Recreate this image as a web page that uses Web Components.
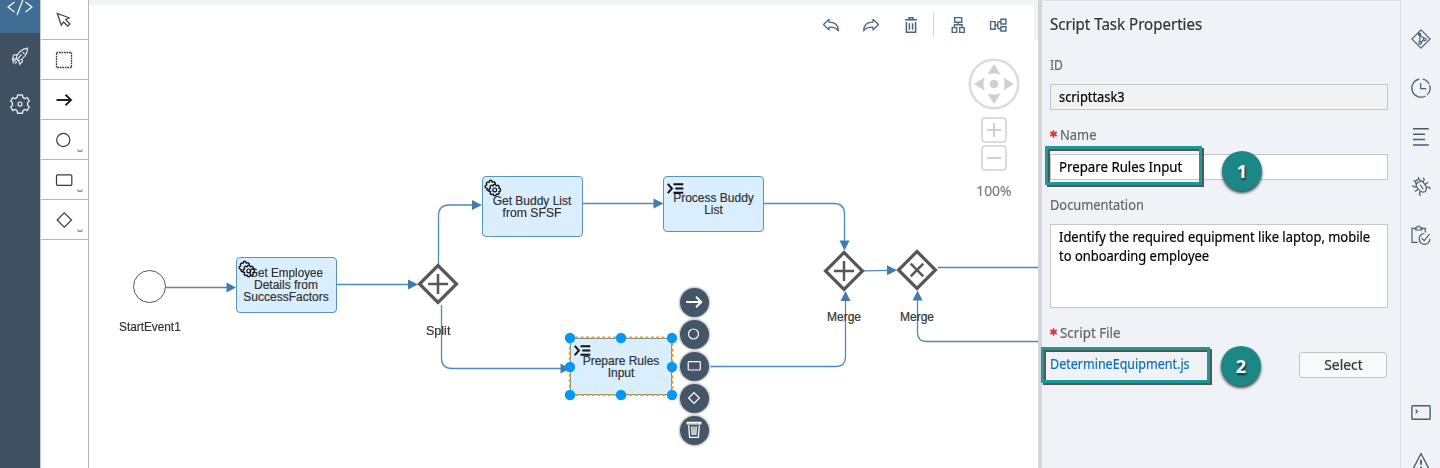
<!DOCTYPE html>
<html lang="en">
<head>
<meta charset="utf-8">
<title>Process editor</title>
<style>
html,body{margin:0;height:100%;overflow:hidden;background:#fff}
body{font-family:"Liberation Sans",Arial,sans-serif}
</style>
</head>
<body>
<process-editor></process-editor>
<script>
const ICONS = {
  code: [30,30,'<path d="M9.500 10 L3 15 L9.500 20 M20.500 10 L27 15 L20.500 20 M18 7.500 L12 23"/>'],
  rocket: [20,20,'<path d="M6.200 12.800 C6.500 8 11 3 17.500 2.200 C17.500 8 13.500 13 8.500 14.800 Z M7 8.600 L3.500 9.200 L2.500 12.800 L6.200 12.600 M12 13.200 L12.500 15.500 L9.800 18.300 L8.600 14.800 M11.500 8.500 L7.500 13.200 M12.700 6.200 L14.500 7.800 M5.500 14 L2.800 17 M3.700 13.500 L2.300 15 M7 15.500 L5 18"/>'],
  gear: [22,22,'<path stroke-linejoin="round" stroke-width="1.400" d="M8.600 2 H13.400 L14.100 4.700 L15.900 5.700 L18.300 4.700 L20.300 8 L18.600 9.700 V12.300 L20.300 14 L18.300 17.500 L15.900 16.400 L14.100 17.500 L13.400 20.200 H8.600 L7.900 17.500 L6.100 16.400 L3.700 17.500 L1.700 14 L3.400 12.300 V9.700 L1.700 8 L3.700 4.700 L6.100 5.700 L7.900 4.700 Z"/><circle cx="11" cy="11.100" r="2"/>'],
  pointer: [20,20,'<path d="M3.300 3.500 L7.300 15.200 L9.600 12 L13.800 16.200 L16 14 L11.800 9.800 L15.200 7.800 Z"/>'],
  marquee: [20,20,'<rect x="2.500" y="2.500" width="15" height="15" stroke-width="1.300" stroke-dasharray="1.700 0.800"/>'],
  arrow: [20,20,'<path stroke-width="1.900" d="M2.500 10 H17 M11.500 4.800 L17 10 L11.500 15.200"/>'],
  circle: [20,20,'<circle cx="9.300" cy="10" r="6.600"/>'],
  rect: [20,20,'<rect x="2.500" y="4.800" width="15.300" height="10.500" rx="1"/>'],
  diamond: [20,20,'<path d="M10.300 2.800 L17.500 10 L10.300 17.200 L3.100 10 Z"/>'],
  chev: [6,4,'<path d="M0.500 0.800 Q1.500 2.800 3 2.300 Q4.500 2.800 5.500 0.800" stroke-width="1.200"/>'],
  undo: [20,20,'<path stroke-linejoin="round" d="M2.500 9.500 L8 4.300 V7.200 C13.500 7.200 17.200 10 17.400 15.800 C15 12.600 12 12 8 12.200 V15 Z"/>'],
  redo: [20,20,'<path stroke-linejoin="round" d="M17.500 9.500 L12 4.300 V7.200 C6.500 7.200 2.800 10 2.600 15.800 C5 12.600 8 12 12 12.200 V15 Z"/>'],
  trash: [20,20,'<path stroke-width="1.500" d="M4 4.800 H16 M8 4.300 V2.700 H12 V4.300 M5.400 7 V17.300 H14.600 V7 M8.400 8.200 V14.800 M11.600 8.200 V14.800"/>'],
  tree: [20,20,'<path stroke-width="1.400" d="M6.700 2.600 H13.700 V7.200 H6.700 Z M4.200 12.600 H8.700 V17.400 H4.200 Z M11.700 12.600 H16.200 V17.400 H11.700 Z M10.200 7.200 V9.800 M6.400 12.600 V9.800 H14 V12.600"/>'],
  htree: [20,20,'<path stroke-width="1.400" d="M2.600 6.600 H7.100 V14.300 H2.600 Z M12.900 4.300 H17.900 V9 H12.900 Z M12.900 11.700 H17.900 V16 H12.900 Z M7.100 10.300 H9.700 M12.900 6.800 H11 Q9.800 6.800 9.800 8 V12.600 Q9.800 13.800 11 13.800 H12.900"/>'],
  git: [20,20,'<path stroke-width="1.100" d="M10 .9 L19.100 10 L10 19.100 L.9 10 Z M8.600 5 L9 12 M9.300 6.500 L13.300 9.500 M12.600 11 L10.500 13"/><circle cx="8.500" cy="5.200" r="1.100"/><circle cx="13.800" cy="10.300" r="1.300"/><circle cx="9.200" cy="13.700" r="1.400"/>'],
  clock: [20,20,'<path d="M8.300 1.100 A9.100 9.100 0 1 0 14.500 17.900 M16 16.900 A9.100 9.100 0 0 0 18.700 7.300 M18.200 6 A9.100 9.100 0 0 0 11.800 1.200 M9.700 5 V10.700 H15.300"/>'],
  lines: [20,20,'<path stroke-width="1.500" d="M2 1.800 H17.800 M2 7.300 H14 M2 12.500 H14 M2 18 H17.800"/>'],
  bug: [20,20,'<g transform="rotate(-35 10 10)"><path d="M6 8 Q6 5.500 10 5.500 Q14 5.500 14 8 V11.500 Q14 16 10 17 Q6 16 6 11.500 Z M7 5.800 Q7.300 2.800 10 2.800 Q12.700 2.800 13 5.800 M10 8.500 V14 M8 3.500 L7 1 M12 3.500 L13 1 M6 8 L3.500 6.500 V4.500 M6 11 H2 M6.500 14 L4 15.500 V18 M14 8 L16.500 6.500 V4.500 M14 11 H18 M13.500 14 L16 15.500 V18"/></g>'],
  clip: [20,20,'<path d="M6.500 17.300 H1 V3.400 H4.300 M11 3.400 H14.300 V7.400 M4.700 5 V2.800 H6 Q6 1 7.700 1 Q9.300 1 9.400 2.800 H10.700 V5 Z M13.300 8.500 A5.400 5.400 0 1 0 19 13.800 M10.600 13.200 L13.300 15.700 L18.500 9"/>'],
  term: [20,20,'<rect x=".9" y="2.700" width="18.200" height="13.600" rx=".8" stroke-width="1.400"/><path d="M4.600 6.500 L6.400 8.400 L4.600 10.300"/>'],
  warn: [20,20,'<path stroke-linejoin="round" d="M10 1.500 L19 19 H1 Z" stroke-width="1.400"/><path d="M10 7.800 V12.800 M10 14.500 V16.300" stroke-width="1.800"/>'],
  gears: [20,20,'<path stroke-width="1.300" d="M5.400 12.300 L4.400 13 L2.900 11.800 L3.200 10.300 L1.300 9.600 L1.200 7.700 L2.800 7 L2.300 5.300 L3.600 4 L5 4.500 L5.700 2.500 H7.600 L8.300 4.300 L10 3.700 L11.400 5 L11 6.400"/><path stroke-width="1.300" stroke-linejoin="round" d="M9.800 6.400 H11.500 L12.200 7.900 L13.900 7.100 L15.300 8.500 L14.700 10.200 L16.500 10.900 V12.900 L14.800 13.600 L15.400 15.300 L14 16.600 L12.400 16 L11.600 17.700 H9.800 L9 16 L7.400 16.700 L6 15.300 L6.700 13.700 L5 12.900 V11 L6.600 10.200 L5.900 8.600 L7.300 7.200 L9 7.900 Z"/><circle cx="10.700" cy="11.900" r="1.900"/>'],
  script: [17,13,'<path stroke-width="2" d="M.8 1.800 L4.900 6.500 L.8 11.200 M6.500 2.200 H16.300 M8.300 6.500 H16.300 M6.500 10.800 H16.300"/>'],
  bin: [20,20,'<path stroke-width="1.300" d="M3.200 3.900 H16.800 V2.400 H3.200 Z M4.700 5.300 L5.600 17.300 H14.400 L15.300 5.300 M7.800 6.500 L8.200 15 M10 6.500 V15 M12.200 6.500 L11.800 15"/>'],
  warrow: [20,20,'<path stroke-width="1.900" d="M2.200 10 H17 M12 4.800 L17.300 10 L12 15.200"/>'],
  scircle: [20,20,'<circle cx="9.500" cy="10" r="5"/>'],
  srect: [20,20,'<rect x="4.200" y="5.700" width="12.100" height="8.300" rx=".7"/>'],
  sdiamond: [20,20,'<path d="M10 4.600 L15.400 10 L10 15.400 L4.600 10 Z"/>']
};

function define(name, css, html, setup) {
  customElements.define(name, class extends HTMLElement {
    connectedCallback() {
      if (this.shadowRoot) return;
      const root = this.attachShadow({mode: 'open'});
      root.innerHTML = '<style>*{box-sizing:border-box}' + css + '</style>' + (typeof html === 'function' ? html(this) : html);
      if (setup) setup(this, root);
    }
  });
}

define('ui-icon', ':host{display:block;flex:none}svg{display:block;overflow:visible;fill:none;stroke:currentColor;stroke-width:1.200}',
  el => { const [w,h,p] = ICONS[el.getAttribute('name')]; return `<svg width="${w}" height="${h}" viewBox="0 0 ${w} ${h}">${p}</svg>`; });

/* One line of text condensed or widened to the width it is given. */
define('fit-line', ':host{display:block;white-space:nowrap}span{display:inline-block;transform-origin:var(--origin,0) 50%;-webkit-text-stroke:.2px currentColor}', '<span><slot></slot></span>',
  (el, root) => {
    const s = root.querySelector('span'), w = +el.getAttribute('w');
    if (w) s.style.transform = `scaleX(${w / s.offsetWidth})`;
  });

define('side-nav', `:host{display:flex;flex-direction:column;width:40px;height:468px;background:#3f5161;color:#e1e6ea;flex:none}
  div{height:49px;display:flex;align-items:center;justify-content:center}
  .on{height:33px;background:#3f6d94;color:#fff;align-items:flex-start;overflow:hidden}.on ui-icon{margin-top:-8px}`,
  `<div class="on"><ui-icon name="code"></ui-icon></div><div style="height:46px"><ui-icon name="rocket"></ui-icon></div><div><ui-icon name="gear"></ui-icon></div>`);

define('tool-cell', `:host{display:flex;height:40px;border-bottom:1px solid #b7b7b7;align-items:center;justify-content:center;position:relative;color:#3a3a3a;padding:1px 2px 0 0}
  .c{position:absolute;right:5px;bottom:6px;color:#777}`,
  el => `<ui-icon name="${el.getAttribute('icon')}"></ui-icon>` + (el.hasAttribute('more') ? '<ui-icon class="c" name="chev"></ui-icon>' : ''));

define('tool-palette', ':host{display:block;width:49px;height:468px;border-right:1px solid #b7b7b7;border-left:1px solid #c6cbd0;background:#fff;flex:none}',
  `<tool-cell icon="pointer"></tool-cell><tool-cell icon="marquee"></tool-cell><tool-cell icon="arrow" style="color:#222"></tool-cell><tool-cell icon="circle" more></tool-cell><tool-cell icon="rect" more></tool-cell><tool-cell icon="diamond" more></tool-cell>`);

define('canvas-toolbar', `:host{display:flex;height:40px;border-top:5px solid #eff4f9;justify-content:flex-end;color:#4a6580;border-right:4px solid #eff4f9;padding-right:16.500px}
  div{width:40px;display:flex;justify-content:center;padding-top:10px}i{width:1px;height:24px;margin:8px 4px 0 2px;background:#d3d6d9}`,
  ['undo','redo','trash'].map(n=>`<div><ui-icon name="${n}"></ui-icon></div>`).join('') + '<i></i>' + ['tree','htree'].map(n=>`<div><ui-icon name="${n}"></ui-icon></div>`).join(''));

define('zoom-pad', `:host{display:flex;flex-direction:column;align-items:center;width:52px;font:14px/20px "Noto Sans",sans-serif;color:#7d7d7d;--origin:50%}
  svg{display:block}.b{width:26px;height:26px;border:2px solid #dcdcdc;border-radius:4px;margin-bottom:2px;position:relative}
  .b:before,.v:after{content:"";position:absolute;background:#d0d0d0;left:4px;top:10px;width:14px;height:2px}.v:after{left:10px;top:4px;width:2px;height:14px}`,
  `<svg width="52" height="52" viewBox="-26 -26 52 52" style="margin-bottom:7px"><circle r="24.200" fill="#fff" stroke="#dcdcdc" stroke-width="2.500"/><g fill="#d0d0d0"><circle r="4.300"/><path d="M0 -20 L6.500 -9.500 Q0 -11.500 -6.500 -9.500 Z"/><path d="M0 20 L6.500 9.500 Q0 11.500 -6.500 9.500 Z M-20 0 L-9.500 6.500 Q-11.500 0 -9.500 -6.500 Z M20 0 L9.500 6.500 Q11.500 0 9.500 -6.500 Z"/></g></svg>
  <div class="b v"></div><div class="b"></div><fit-line w="35.500" style="margin-top:8px">100%</fit-line>`);

define('task-node', `:host{position:absolute;display:flex;flex-direction:column;align-items:center;justify-content:center;border:1.500px solid #5c92bf;border-radius:4px;background:#d9eeff;font-size:12px;line-height:12px;color:#333;--origin:50%}
  ui-icon{position:absolute;left:1px;top:1px;color:#111}:host([icon=script]) ui-icon{top:5px;left:2.500px}`,
  el => `<slot></slot><ui-icon name="${el.getAttribute('icon')}"></ui-icon>`);

define('gateway-node', `:host{position:absolute;display:block;width:42px;height:42px}svg{display:block}`,
  el => `<svg width="42" height="42" viewBox="-21 -21 42 42" fill="none" stroke="#585858"><path stroke-width="3.200" fill="#fff" d="M0 -18.500 L18.500 0 L0 18.500 L-18.500 0 Z"/><path stroke-width="2.500" d="${el.hasAttribute('x') ? 'M-6.300 -6.300 L6.300 6.300 M-6.300 6.300 L6.300 -6.300' : 'M-10 0 H10 M0 -10 V10'}"/></svg>`);

define('node-label', ':host{position:absolute;display:block;font-size:12px;line-height:14px;color:#333;white-space:nowrap}', '<slot></slot>');

define('context-menu', `:host{position:absolute;display:flex;flex-direction:column;gap:3px}
  div{width:29px;height:29px;border-radius:50%;background:#435566;color:#fff;display:flex;align-items:center;justify-content:center;box-shadow:0 0 1px 1.500px #d0d0d0}`,
  ['warrow','scircle','srect','sdiamond','bin'].map(n=>`<div><ui-icon name="${n}"></ui-icon></div>`).join(''));

const handles = [[570,338],[621,338],[672,338],[570,367],[672,367],[570,395],[621,395],[672,395]];
define('process-canvas', `:host{display:block;position:relative;width:949px;height:468px;background:#fff;overflow:hidden;flex:none}
  .flow{position:absolute;left:-89px;top:0;width:1127px;height:468px}svg.e{position:absolute;left:0;top:0}zoom-pad{position:absolute;left:967.500px;top:58px}`,
  `<canvas-toolbar></canvas-toolbar><div class="flow"><zoom-pad></zoom-pad>
  <svg class="e" width="1127" height="468" fill="none" stroke="#5089bb" stroke-width="1.300"><circle cx="149.500" cy="286.500" r="16" stroke="#555" stroke-width="1"/>
  <path d="M166 287.500 H230 M337 284.500 H410 M438.500 264 V216 Q438.500 205 449 205 H474 M583 203.500 H656 M764 203.500 H834 Q844.500 203.500 844.500 214 V244 M864 270.800 L890 270.300 M938 267.500 H1038 M1038 341.500 H926.500 Q917.500 341.500 917.500 332.500 V298 M710 366.500 H836 Q845.500 366.500 845.500 357 V298 M441.500 305 V358 Q441.500 368.500 452 368.500 H563"/>
  <g fill="#427cae" stroke="none"><path d="M236 287.500 l-9.500 -5 v10z M418 284.500 l-10 -5 v10z M482 205 l-10 -5 v10z M663.500 203.500 l-10 -5 v10z M570 368.500 l-9.500 -5 v10z M897 270.300 l-10 -5 v10z M844.500 250.500 l-5 -10 h10z M845.500 291 l-5 10 h10z M917.500 290.500 l-5 10 h10z"/></g></svg>
  <task-node icon="gears" style="left:235.500px;top:256.500px;width:101px;height:56px"><fit-line w="74">Get Employee</fit-line><fit-line w="64">Details from</fit-line><fit-line w="85">SuccessFactors</fit-line></task-node>
  <task-node icon="gears" style="left:481.500px;top:176px;width:101px;height:61px"><fit-line w="79">Get Buddy List</fit-line><fit-line w="59">from SFSF</fit-line></task-node>
  <task-node icon="script" style="left:663px;top:175.500px;width:101px;height:56px"><fit-line w="81">Process Buddy</fit-line><fit-line w="19">List</fit-line></task-node>
  <task-node icon="script" style="left:570px;top:338px;width:102px;height:57px;border-radius:0"><fit-line w="77">Prepare Rules</fit-line><fit-line w="27">Input</fit-line></task-node>
  <svg class="e" width="1127" height="468" fill="none"><rect x="569.800" y="337.500" width="102.500" height="57.500" stroke="#f59a16" stroke-width="2" stroke-dasharray="3 2.400"/><g fill="#0598f2">${handles.map(([x,y])=>`<circle cx="${x}" cy="${y}" r="5.200"/>`).join('')}</g></svg>
  <gateway-node style="left:417px;top:263px"></gateway-node><gateway-node style="left:823px;top:249.500px"></gateway-node><gateway-node x style="left:896px;top:248.500px"></gateway-node>
  <node-label style="left:118.500px;top:320px"><fit-line w="62">StartEvent1</fit-line></node-label>
  <node-label style="left:426px;top:324px"><fit-line w="24">Split</fit-line></node-label>
  <node-label style="left:827px;top:310px"><fit-line w="34">Merge</fit-line></node-label>
  <node-label style="left:900px;top:310px"><fit-line w="34">Merge</fit-line></node-label>
  <context-menu style="left:679.500px;top:287.500px"></context-menu></div>`);

define('form-field', `:host{display:block;margin-bottom:15px}label{display:flex;height:20px;line-height:20px;margin-bottom:9px;color:#666}
  svg{width:7px;height:8px;margin:5px 3px 0 0}`,
  el => `<label>${el.hasAttribute('required') ? '<svg viewBox="-3.500 -4 7 8"><path stroke="#cc3a3a" stroke-width="1.700" d="M0 -3.800V3.800M-3.300 -1.900L3.300 1.900M-3.300 1.900L3.300 -1.900"/></svg>' : ''}<fit-line w="${el.getAttribute('w')}">${el.getAttribute('label')}</fit-line></label><slot></slot>`);

define('text-box', `:host{display:block;width:338px;height:26px;border:1px solid #c4c6c8;background:#fff;color:#000;padding:2px 8px 0;line-height:19px}
  :host([readonly]){background:#f2f2f3}`, '<slot></slot>');

define('push-button', ':host{display:flex;width:88px;height:26px;border:1px solid #c2c4c6;border-radius:3px;background:#f8fafa;color:#333;align-items:center;justify-content:center;padding-bottom:2px;--origin:50%}', '<slot></slot>');

define('call-out', `:host{position:absolute;display:block}.f{width:100%;height:100%;border:3px solid #1b9a97;filter:drop-shadow(2.500px 2.500px .7px #555)}
  b{position:absolute;top:var(--t,5px);left:var(--n);width:40px;height:40px;border-radius:50%;background:#1c8885;color:#fff;font:bold 18px/40px "Open Sans",sans-serif;text-align:center;box-shadow:0 2px 3px #444;text-shadow:1px 2px 2px #134}`,
  '<div class="f"></div><b><slot></slot></b>');

define('properties-panel', `:host{display:block;position:relative;width:362px;height:468px;border-left:4px solid #d5d5d5;background:#eff3f8;padding:0 0 0 8px;font:14px/19px "Noto Sans",sans-serif;flex:none;border-top:1px solid #dfe1e4}
  h1{margin:0;height:54px;padding-top:11px;font:16px/24px "Noto Sans",sans-serif;color:#333}.row{display:flex;align-items:center;justify-content:space-between;width:337px}`,
  `<h1><fit-line w="152.500">Script Task Properties</fit-line></h1>
  <form-field label="ID" w="13"><text-box readonly><fit-line w="66">scripttask3</fit-line></text-box></form-field>
  <form-field label="Name" w="36" required><text-box><fit-line w="123">Prepare Rules Input</fit-line></text-box></form-field>
  <form-field label="Documentation" w="93.500"><text-box style="height:84px"><fit-line w="311">Identify the required equipment like laptop, mobile</fit-line><fit-line w="150">to onboarding employee</fit-line></text-box></form-field>
  <form-field label="Script File" w="61" required><div class="row"><fit-line w="139.500" style="color:#0a6ebd;margin-top:-3px">DetermineEquipment.js</fit-line><push-button><fit-line w="38.500">Select</fit-line></push-button></div></form-field>
  <call-out style="left:3px;top:145px;width:157px;height:39px;--n:177px">1</call-out>
  <call-out style="left:-1px;top:346px;width:169px;height:36px;--n:180px;--t:-1px">2</call-out>`);

define('right-rail', `:host{display:flex;flex-direction:column;width:40px;height:468px;border-left:1px solid #dcdfe3;background:#eff3f8;color:#475e75;align-items:center;padding:28.500px 0 0 0;flex:none;gap:29px}`,
  ['git','clock','lines','bug','clip'].map(n=>`<ui-icon name="${n}"></ui-icon>`).join('')+'<ui-icon name="term" style="margin-top:129px"></ui-icon><ui-icon name="warn"></ui-icon>');

define('process-editor', ':host{display:flex;width:1440px;height:468px;overflow:hidden}', '<side-nav></side-nav><tool-palette></tool-palette><process-canvas></process-canvas><properties-panel></properties-panel><right-rail></right-rail>');
</script>
</body>
</html>
